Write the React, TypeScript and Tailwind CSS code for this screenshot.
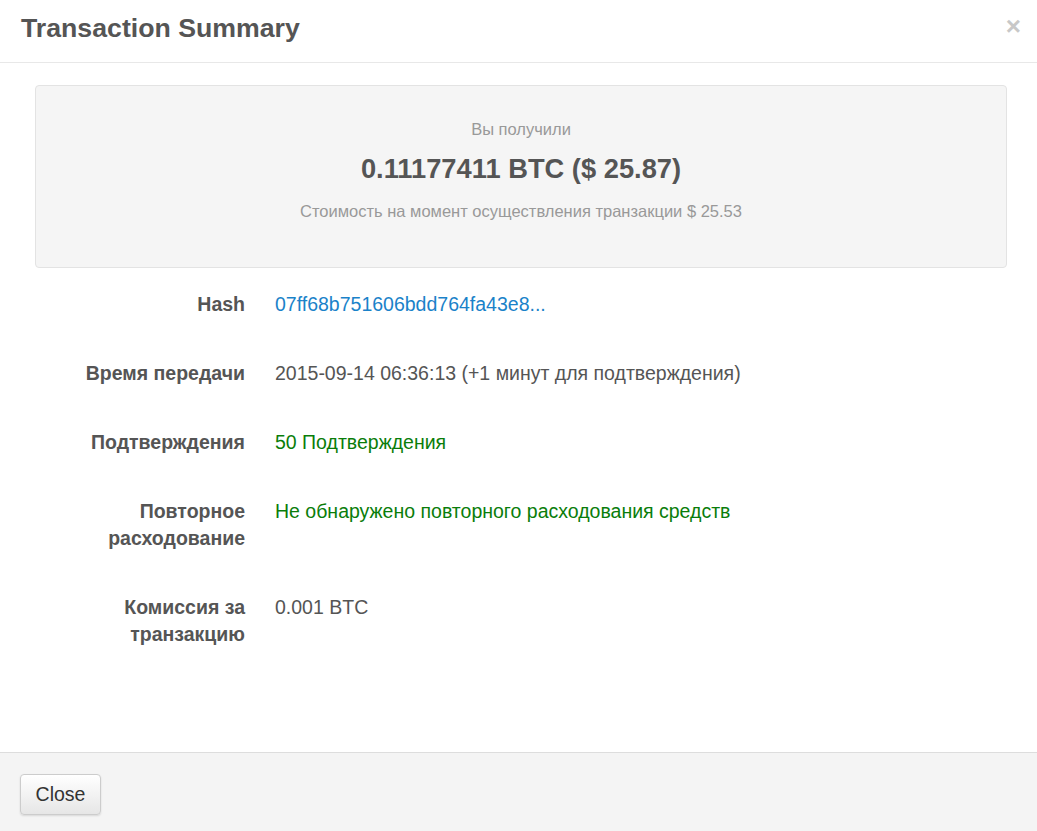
import React from 'react';

const rows: { label: string[]; value: string; tone: 'link' | 'green' | 'plain' }[] = [
  { label: ['Hash'], value: '07ff68b751606bdd764fa43e8...', tone: 'link' },
  { label: ['Время передачи'], value: '2015-09-14 06:36:13 (+1 минут для подтверждения)', tone: 'plain' },
  { label: ['Подтверждения'], value: '50 Подтверждения', tone: 'green' },
  { label: ['Повторное', 'расходование'], value: 'Не обнаружено повторного расходования средств', tone: 'green' },
  { label: ['Комиссия за', 'транзакцию'], value: '0.001 BTC', tone: 'plain' },
];

const toneClass = {
  link: 'text-[#1a82c9]',
  green: 'text-[#0a7d0a]',
  plain: 'text-[#555555]',
};

const App: React.FC = () => {
  return (
    <div className="w-[1037px] h-[831px] bg-white flex flex-col font-['Liberation_Sans',Arial,sans-serif] text-[#555555] overflow-hidden">
      {/* Header */}
      <header className="h-[63px] shrink-0 border-b border-[#e8e8e8] flex items-center justify-between pl-[21px] pr-[16px]">
        <h4 className="text-[26.7px] font-bold leading-none text-[#555555] -mt-[6px]">Transaction Summary</h4>
        <button className="text-[#c8c8c8] text-[26px] font-bold leading-none -mt-[10px]">×</button>
      </header>

      {/* Body */}
      <div className="flex-1 pl-[35px] pr-[30px] pt-[22px]">
        <div className="h-[183px] bg-[#f5f5f5] border border-[#e3e3e3] rounded-[4px] flex flex-col items-center pt-[32px]">
          <div className="text-[16.5px] leading-[22px] text-[#999999]">Вы получили</div>
          <div className="mt-[11px] text-[27.3px] leading-[36px] font-bold text-[#555555]">0.11177411 BTC ($ 25.87)</div>
          <div className="mt-[13px] text-[16.5px] leading-[22px] text-[#999999]">
            Стоимость на момент осуществления транзакции $ 25.53
          </div>
        </div>

        <div className="pt-[23px] flex flex-col gap-[42px]">
          {rows.map((r) => (
            <div key={r.value} className="flex text-[19.5px] leading-[27px]">
              <div className="w-[210px] text-right font-bold text-[#555555]">
                {r.label.map((l) => (
                  <div key={l}>{l}</div>
                ))}
              </div>
              <div className={`pl-[30px] ${toneClass[r.tone]}`}>{r.value}</div>
            </div>
          ))}
        </div>
      </div>

      {/* Footer */}
      <footer className="h-[79px] shrink-0 border-t border-[#dddddd] bg-[#f4f4f4] pl-[20px] pt-[21px]">
        <button className="w-[81px] h-[41px] rounded-[4px] border border-[#cccccc] bg-gradient-to-b from-white to-[#e6e6e6] shadow-[0_1px_2px_rgba(0,0,0,0.12)] text-[19.5px] text-[#333333]">
          Close
        </button>
      </footer>
    </div>
  );
};

export default App;
